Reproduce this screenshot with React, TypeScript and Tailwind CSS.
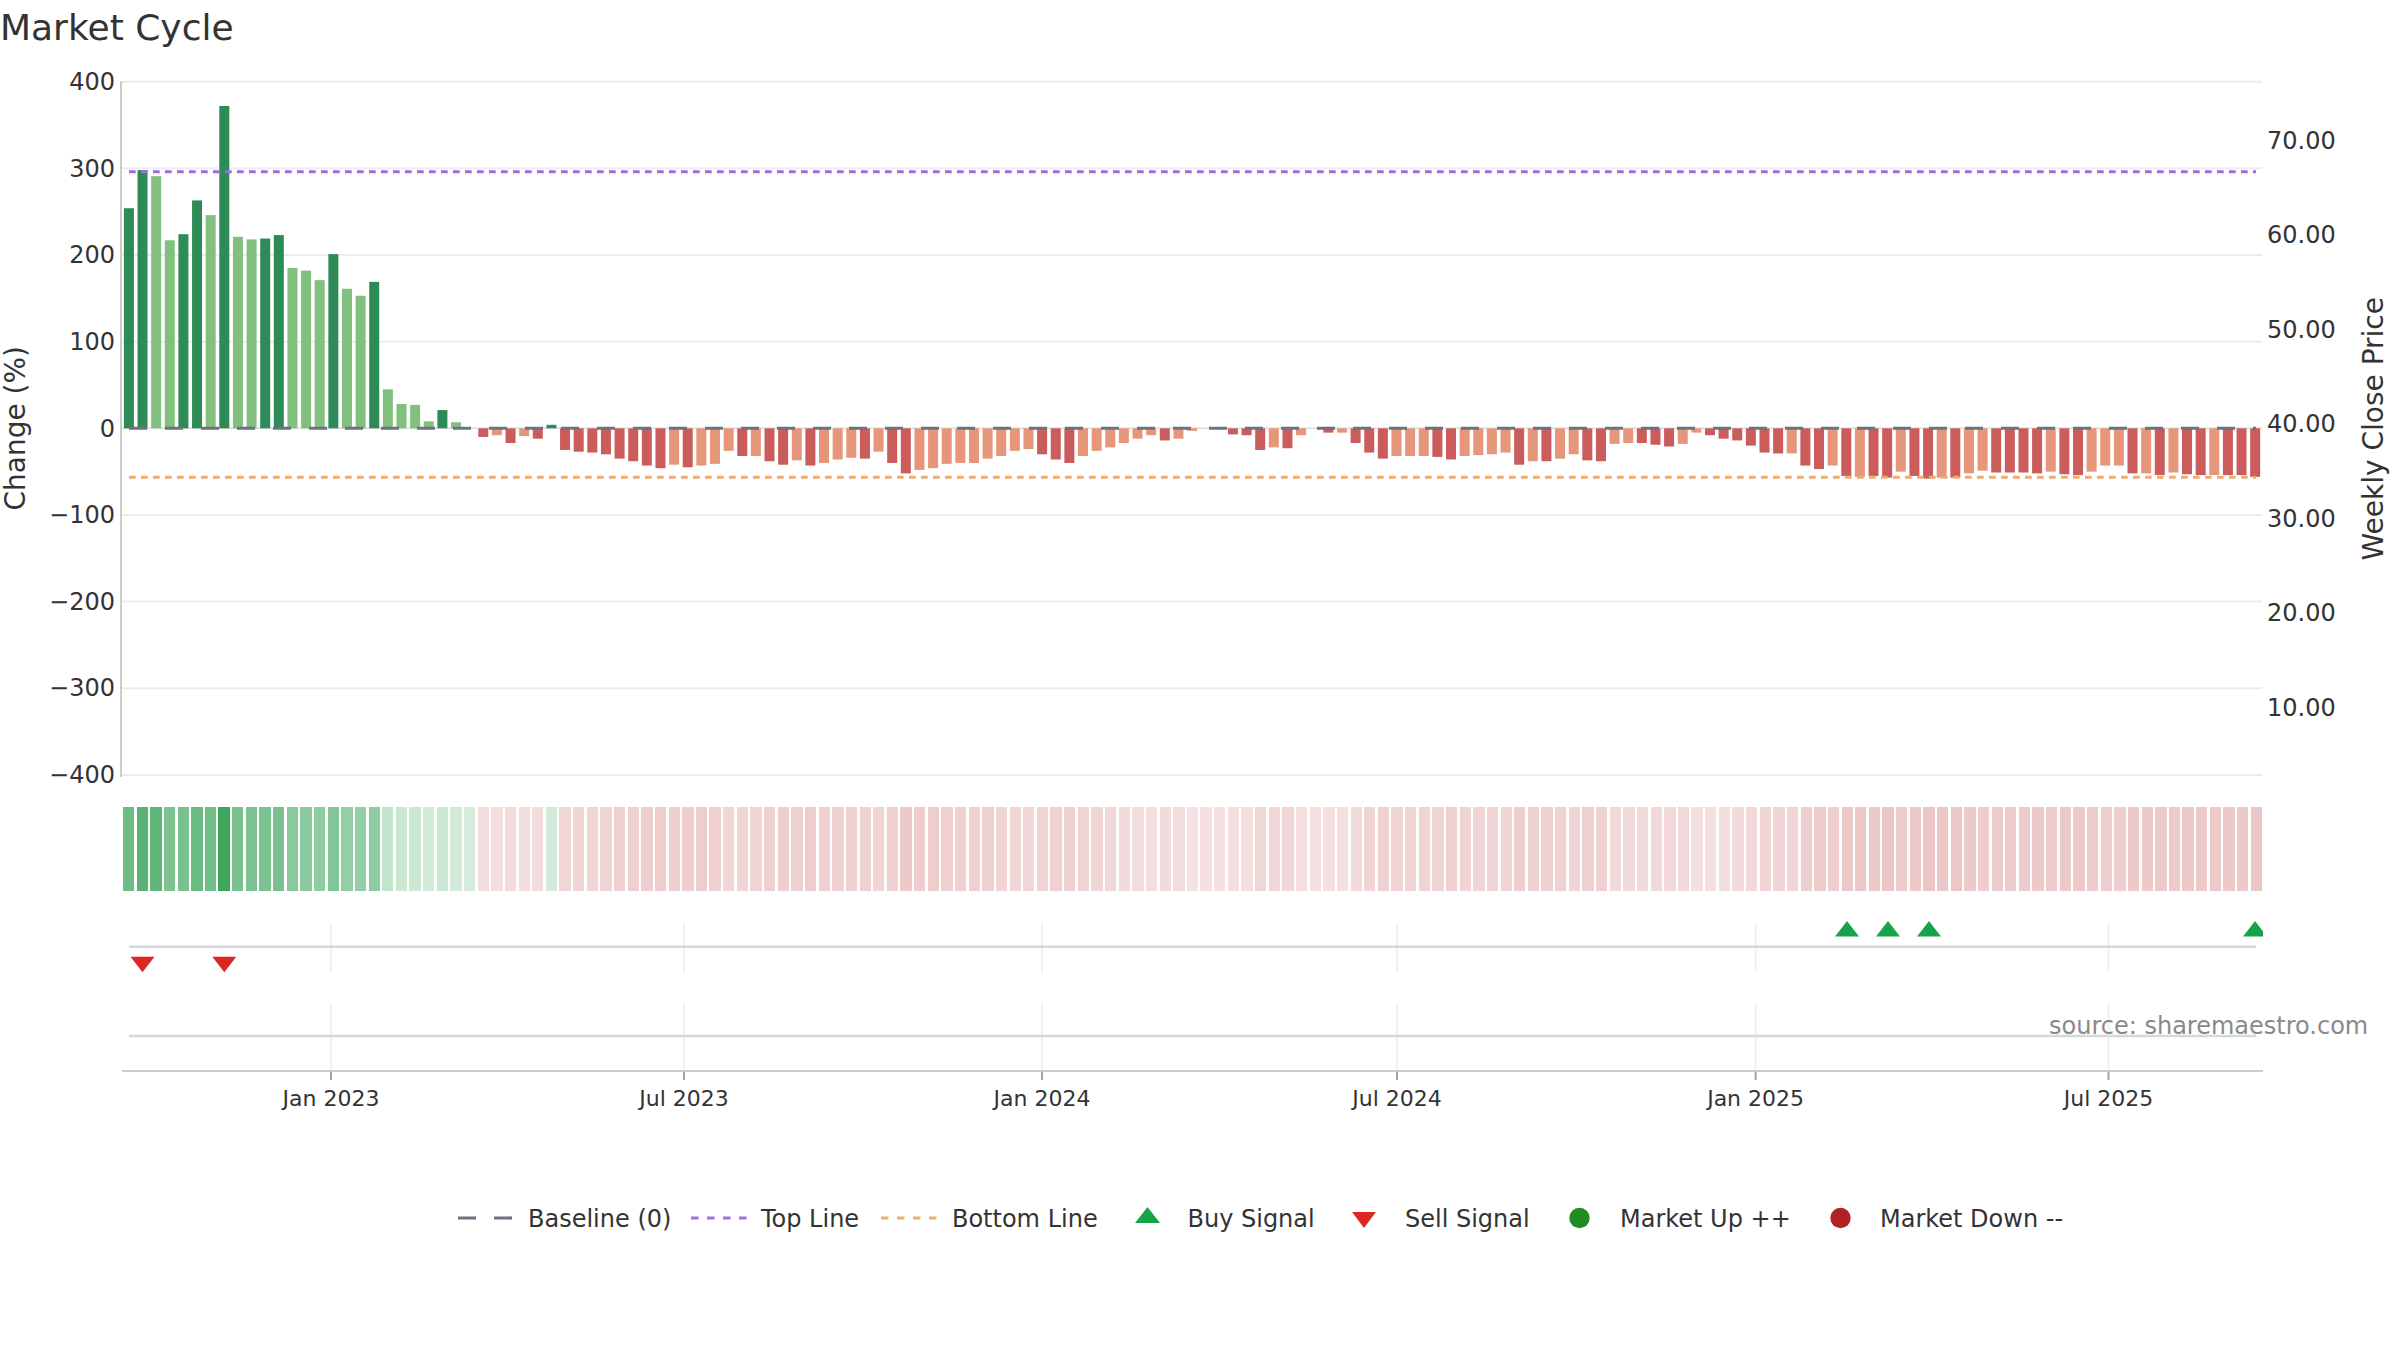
import React from "react";

const RAW =
  "254d 298d 291l 217l 224d 263d 246l 372d 221l 218l 219d 223d 185l 182l 171l 201d 161l 153l 169d 45l 28l 27l 8l 21d 7l 0.5l " +
  "-10d -8l -17d -9l -12d 4d -25d -27d -28d -30d -35d -38d -43d -46d -42l -45d -43l -41l -26l -32d -32l -38d -42d -37l -43d -40l -36l -34l -35d -27l -40d -52d -48l -46l -41l -40l -40l -35l -32l -26l -24l -30d -36d -40d -32l -26l -22l -17l -12l -8l " +
  "-14d -12l -3l -0.5d -0.5d -7d -8d -25d -22l -23d -8l -0.5d -5d -5l -17d -28d -35d -32l -32l -32l -33d -36d -32l -31l -30l -28l -42d -38l -38d -35l -30l -37d -38d -18l -17l -17d -19d -21d -18l -5l -8d -12d -14d -20d -28d -29d -29l -43d -47d -43l " +
  "-55d -56l -55d -57d -50l -55d -58d -57l -57d -52l -49l -51d -51d -51d -52d -50l -53d -54d -50l -43l -43l -52d -52l -54d -51l -53d -54d -54l -54d -54d -56d";

const data = RAW.split(" ").map((s) => ({
  v: parseFloat(s),
  strong: s.endsWith("d"),
}));

const ZERO = 428.3;
const SCALE = 0.8665;
const center = (i: number) => 128.9 + 13.63 * i;

const grid = [400, 300, 200, 100, -100, -200, -300, -400];
const leftTicks = ["400", "300", "200", "100", "0", "−100", "−200", "−300", "−400"];
const rightTicks = ["70.00", "60.00", "50.00", "40.00", "30.00", "20.00", "10.00"];
const dateX = [331, 684, 1042, 1397, 1755.6, 2108.5];

function heat(v: number) {
  if (v > 0) {
    const a = 0.2 + (0.73 * v) / 372;
    return `rgba(46,160,80,${a})`;
  }
  const a = 0.15 + 0.0024 * Math.abs(v);
  return `rgba(190,60,62,${a})`;
}

function barColor(v: number, strong: boolean) {
  if (v > 0) return strong ? "#2e8b57" : "#81c07f";
  return strong ? "#ca5c5c" : "#e6967a";
}

function Triangle({ cx, top, up, w = 24, h = 15.5 }: { cx: number; top: number; up: boolean; w?: number; h?: number }) {
  const pts = up
    ? `${cx},${top} ${cx + w / 2},${top + h} ${cx - w / 2},${top + h}`
    : `${cx - w / 2},${top} ${cx + w / 2},${top} ${cx},${top + h}`;
  return <polygon points={pts} fill={up ? "#16a34a" : "#dc2626"} />;
}

export default function App() {
  return (
    <div className="relative h-[1350px] w-[2400px] overflow-hidden bg-white font-['DejaVu_Sans',sans-serif] text-[#333]">
      <h1 className="h-[56px] text-[36px] font-normal leading-[56px]">Market Cycle</h1>

      <div className="mt-[14px] flex h-[717px]">
        <div className="flex w-[32px] shrink-0 items-center justify-center">
          <span className="rotate-180 whitespace-nowrap text-[28px] leading-[32px] [writing-mode:vertical-rl]">Change (%)</span>
        </div>
        <div className="flex w-[83px] shrink-0 flex-col justify-between text-right text-[24px] leading-[24px]">
          {leftTicks.map((t) => (
            <div key={t} className="h-[24px]">{t}</div>
          ))}
        </div>
        <svg className="ml-[5px] mt-[10px] h-[700px] w-[2145px] shrink-0" viewBox="120 80 2145 700">
          <line x1={121} y1={81} x2={121} y2={777} stroke="#cccccc" strokeWidth={2} />
          {grid.map((g) => (
            <line key={g} x1={122} y1={ZERO - g * SCALE} x2={2262} y2={ZERO - g * SCALE} stroke="#ececec" strokeWidth={2} />
          ))}
          <line x1={122} y1={ZERO} x2={2262} y2={ZERO} stroke="#dcdcdc" strokeWidth={1.5} />
          {data.map((d, i) =>
            Math.abs(d.v) < 1 ? null : (
              <rect
                key={i}
                x={center(i) - 5}
                y={d.v > 0 ? ZERO - d.v * SCALE : ZERO}
                width={10}
                height={Math.abs(d.v) * SCALE}
                fill={barColor(d.v, d.strong)}
              />
            ),
          )}
          <line x1={129} y1={ZERO} x2={2256} y2={ZERO} stroke="#6b7280" strokeWidth={3} strokeDasharray="18 18" />
          <line x1={129} y1={171.7} x2={2256} y2={171.7} stroke="#9f6be0" strokeWidth={3} strokeDasharray="6.7 5.3" />
          <line x1={129} y1={477.3} x2={2256} y2={477.3} stroke="#efac72" strokeWidth={3} strokeDasharray="6.7 5.3" />
        </svg>
        <div className="ml-[2px] flex w-[70px] shrink-0 flex-col gap-y-[70.5px] pt-[58.7px] text-[24px] leading-[24px]">
          {rightTicks.map((t) => (
            <div key={t} className="h-[24px]">{t}</div>
          ))}
        </div>
        <div className="flex w-[74px] shrink-0 items-center justify-center">
          <span className="rotate-180 whitespace-nowrap text-[28px] leading-[32px] [writing-mode:vertical-rl]">Weekly Close Price</span>
        </div>
      </div>

      <div className="ml-[123px] mt-[19.7px] grid h-[84.3px] w-[2139px] grid-cols-[repeat(157,1fr)] gap-x-[2.33px]">
        {data.map((d, i) => (
          <div key={i} style={{ backgroundColor: heat(d.v) }} />
        ))}
      </div>

      <svg className="ml-[120px] mt-[24px] block h-[170px] w-[2145px]" viewBox="120 915 2145 170">
        {dateX.map((x) => (
          <g key={x}>
            <line x1={x} y1={923} x2={x} y2={972} stroke="#eef0f2" strokeWidth={2} />
            <line x1={x} y1={1003} x2={x} y2={1071} stroke="#eef0f2" strokeWidth={2} />
            <line x1={x} y1={1071} x2={x} y2={1080} stroke="#a3a3a3" strokeWidth={2} />
          </g>
        ))}
        <line x1={129} y1={946.7} x2={2256} y2={946.7} stroke="#d8d8d8" strokeWidth={2.4} />
        <line x1={129} y1={1036} x2={2256} y2={1036} stroke="#d8d8d8" strokeWidth={2.4} />
        <line x1={122} y1={1071} x2={2263} y2={1071} stroke="#cccccc" strokeWidth={2} />
        <Triangle cx={142.5} top={956.7} up={false} />
        <Triangle cx={224.3} top={956.7} up={false} />
        <Triangle cx={1847} top={921} up />
        <Triangle cx={1888} top={921} up />
        <Triangle cx={1929} top={921} up />
        <svg x={2240} y={915} width={23} height={30} viewBox="2240 915 23 30">
          <Triangle cx={2255} top={921} up />
        </svg>
      </svg>

      <div className="ml-[271px] mt-[1.5px] flex h-[26px] text-[22px] leading-[26px]">
        <div className="w-[120px] shrink-0 text-center">Jan 2023</div>
        <div className="ml-[233px] w-[120px] shrink-0 text-center">Jul 2023</div>
        <div className="ml-[238px] w-[120px] shrink-0 text-center">Jan 2024</div>
        <div className="ml-[235px] w-[120px] shrink-0 text-center">Jul 2024</div>
        <div className="ml-[238.6px] w-[120px] shrink-0 text-center">Jan 2025</div>
        <div className="ml-[232.9px] w-[120px] shrink-0 text-center">Jul 2025</div>
      </div>

      <div className="ml-[458px] mt-[88.5px] flex h-[34px] items-center whitespace-nowrap text-[24px] leading-[34px]">
        <svg className="h-[34px] w-[54px] shrink-0" viewBox="0 0 54 34">
          <line x1={0} y1={17} x2={54} y2={17} stroke="#6b7280" strokeWidth={3.2} strokeDasharray="18 18" />
        </svg>
        <span className="ml-[16px] w-[143.6px] shrink-0 pt-[2px]">Baseline (0)</span>
        <svg className="ml-[19.4px] h-[34px] w-[56px] shrink-0" viewBox="0 0 56 34">
          <line x1={0} y1={17} x2={56} y2={17} stroke="#a56ede" strokeWidth={3.2} strokeDasharray="7.5 8.5" />
        </svg>
        <span className="ml-[14px] w-[98px] shrink-0 pt-[2px]">Top Line</span>
        <svg className="ml-[21.6px] h-[34px] w-[56px] shrink-0" viewBox="0 0 56 34">
          <line x1={0} y1={17} x2={56} y2={17} stroke="#efac72" strokeWidth={3.2} strokeDasharray="7.5 8.5" />
        </svg>
        <span className="ml-[15.4px] w-[145px] shrink-0 pt-[2px]">Bottom Line</span>
        <svg className="ml-[38px] h-[34px] w-[25px] shrink-0" viewBox="0 0 25 34">
          <polygon points="12.5,6 25,22 0,22" fill="#16a34a" />
        </svg>
        <span className="ml-[27.5px] w-[126.5px] shrink-0 pt-[2px]">Buy Signal</span>
        <svg className="ml-[38px] h-[34px] w-[24px] shrink-0" viewBox="0 0 24 34">
          <polygon points="0,11 24,11 12,27" fill="#dc2626" />
        </svg>
        <span className="ml-[29px] w-[123px] shrink-0 pt-[2px]">Sell Signal</span>
        <svg className="ml-[41px] h-[34px] w-[21px] shrink-0" viewBox="0 0 21 34">
          <circle cx={10.5} cy={17} r={10.2} fill="#228b22" />
        </svg>
        <span className="ml-[30px] w-[168px] shrink-0 pt-[2px]">Market Up ++</span>
        <svg className="ml-[42px] h-[34px] w-[21px] shrink-0" viewBox="0 0 21 34">
          <circle cx={10.5} cy={17} r={10.2} fill="#b22222" />
        </svg>
        <span className="ml-[29px] shrink-0 pt-[2px]">Market Down --</span>
      </div>

      <div className="absolute left-[2049px] top-[1010px] whitespace-nowrap text-[24px] leading-[32px] text-[#8a8a8a]">
        source: sharemaestro.com
      </div>
    </div>
  );
}
